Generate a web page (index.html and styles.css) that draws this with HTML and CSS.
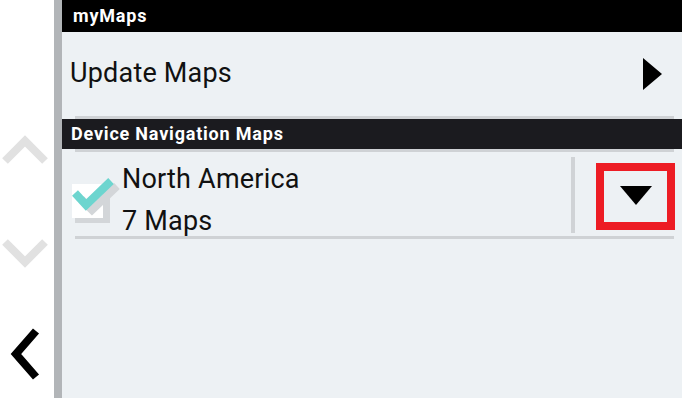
FILE: index.html
```html
<!DOCTYPE html>
<html>
<head>
<meta charset="utf-8">
<link rel="stylesheet" href="styles.css">
</head>
<body>
<div class="app">
  <div class="sidebar">
    <svg class="chev up" width="50" height="32" viewBox="0 0 50 32"><polyline points="5,27 25,7 45,27" fill="none" stroke="#e1e1e1" stroke-width="8"/></svg>
    <svg class="chev down" width="50" height="32" viewBox="0 0 50 32"><polyline points="5,5 25,25 45,5" fill="none" stroke="#e1e1e1" stroke-width="8"/></svg>
    <svg class="chev back" width="40" height="52" viewBox="0 0 40 52"><polyline points="33,3 13,26 33,49" fill="none" stroke="#000" stroke-width="8"/></svg>
  </div>
  <div class="rail"></div>
  <div class="main">
    <div class="header">myMaps</div>
    <div class="update-row">
      <span class="update-label">Update Maps</span>
      <svg class="tri-right" width="19" height="32" viewBox="0 0 19 32"><polygon points="0,0 19,16 0,32" fill="#000"/></svg>
    </div>
    <div class="line"></div>
    <div class="section">Device Navigation Maps</div>
    <div class="line"></div>
    <div class="region-row">
      <svg class="checkbox" width="50" height="52" viewBox="0 0 50 52">
        <rect x="5" y="14" width="35" height="36" fill="#d3d6d9"/>
        <rect x="2" y="11" width="31" height="34" fill="#fff"/>
        <polyline points="8,23 19,34 44,10" fill="none" stroke="#d3d6d9" stroke-width="8" transform="translate(3,3)"/>
        <polyline points="5,20 16,32 41,8" fill="none" stroke="#6dd5cf" stroke-width="8"/>
      </svg>
      <div class="region-text">
        <div class="region-name">North America</div>
        <div class="region-count">7 Maps</div>
      </div>
      <div class="divider"></div>
      <div class="expand">
        <svg width="32" height="19" viewBox="0 0 32 19"><polygon points="0,0 32,0 16,19" fill="#000"/></svg>
      </div>
    </div>
    <div class="line"></div>
  </div>
</div>
</body>
</html>
```
FILE: styles.css
```css
html, body {
  margin: 0;
  padding: 0;
}
body {
  font-family: Roboto, "Liberation Sans", Arial, sans-serif;
  background: #fff;
}
.app {
  display: flex;
  width: 682px;
  height: 398px;
  overflow: hidden;
}
.sidebar {
  width: 54px;
  flex: none;
  background: #fff;
  display: flex;
  flex-direction: column;
  align-items: flex-start;
}
.chev { display: block; flex: none; }
.chev.up { margin-top: 134px; margin-left: 0; }
.chev.down { margin-top: 71px; margin-left: 0; }
.chev.back { margin-top: 59px; margin-left: 3px; }
.rail {
  width: 8px;
  flex: none;
  background: #b2b5b8;
}
.main {
  flex: 1;
  background: #edf1f4;
  display: flex;
  flex-direction: column;
}
.header {
  height: 32px;
  background: #000;
  color: #fff;
  font-weight: bold;
  font-size: 18px;
  letter-spacing: 0.8px;
  line-height: 31px;
  padding-left: 11px;
  flex: none;
}
.update-row {
  height: 84px;
  flex: none;
  display: flex;
  align-items: center;
  justify-content: space-between;
  padding: 0 20px 0 8px;
}
.update-label {
  font-size: 27px;
  letter-spacing: 0.2px;
  color: #111;
  margin-top: -2px;
}
.tri-right { display: block; margin-top: 0; }
.line {
  height: 3px;
  background: #cfd2d5;
  margin-left: 13px;
  margin-right: 8px;
  flex: none;
}
.section {
  height: 30px;
  background: #1b1b1f;
  color: #fff;
  font-weight: bold;
  font-size: 18px;
  letter-spacing: 0.8px;
  line-height: 30px;
  padding-left: 9px;
  flex: none;
}
.region-row {
  height: 84px;
  flex: none;
  display: flex;
  align-items: center;
  padding-left: 8px;
  padding-right: 7px;
}
.checkbox {
  display: block;
  flex: none;
  margin-top: 10px;
  margin-left: 0;
}
.region-text {
  flex: 1;
  margin-left: 2px;
  margin-top: 14px;
  color: #111;
  font-size: 27px;
  letter-spacing: 0.2px;
}
.region-name { line-height: 40px; }
.region-count { line-height: 44px; }
.divider {
  width: 4px;
  height: 76px;
  background: #d0d3d6;
  flex: none;
  margin-top: 2px;
}
.expand {
  width: 63px;
  height: 51px;
  border: 8px solid #ed1c24;
  margin-left: 21px;
  display: flex;
  align-items: center;
  justify-content: center;
  flex: none;
  margin-top: 4px;
}
.expand svg { display: block; margin-top: -2px; }
```
